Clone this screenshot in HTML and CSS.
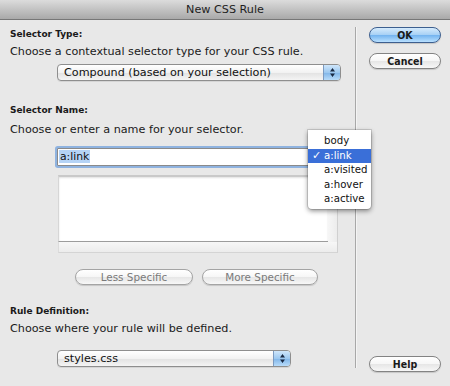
FILE: index.html
```html
<!DOCTYPE html>
<html>
<head>
<meta charset="utf-8">
<link rel="stylesheet" href="styles.css">
</head>
<body>
<div class="window">
  <div class="titlebar">New CSS Rule</div>
  <div class="content">
    <div class="main">
      <div class="label first">Selector Type:</div>
      <div class="desc">Choose a contextual selector type for your CSS rule.</div>
      <div class="popup wide">
        <span class="popup-text">Compound (based on your selection)</span>
        <span class="popup-arrow"><svg width="7" height="11" viewBox="0 0 7 11"><path d="M3.5 1 L6 4.5 H1 Z M3.5 10 L6 6.5 H1 Z" fill="#1a2a44"/></svg></span>
      </div>
      <div class="label second">Selector Name:</div>
      <div class="desc d2">Choose or enter a name for your selector.</div>
      <div class="field"><span class="sel">a:link</span></div>
      <div class="listbox">
        <div class="listrow">
          <div class="listarea"></div>
          <div class="vscroll"></div>
        </div>
        <div class="hscroll"></div>
      </div>
      <div class="specific">
        <span class="pill dim w118">Less Specific</span>
        <span class="pill dim w116">More Specific</span>
      </div>
      <div class="label third">Rule Definition:</div>
      <div class="desc">Choose where your rule will be defined.</div>
      <div class="popup narrow">
        <span class="popup-text">styles.css</span>
        <span class="popup-arrow"><svg width="7" height="11" viewBox="0 0 7 11"><path d="M3.5 1 L6 4.5 H1 Z M3.5 10 L6 6.5 H1 Z" fill="#1a2a44"/></svg></span>
      </div>
    </div>
    <div class="side">
      <div class="sep"></div>
      <div class="buttons">
        <span class="pill default">OK</span>
        <span class="pill">Cancel</span>
        <span class="spacer"></span>
        <span class="pill">Help</span>
      </div>
    </div>
  </div>
  <div class="menu">
    <div class="item">body</div>
    <div class="item active"><span class="check">✓</span>a:link</div>
    <div class="item">a:visited</div>
    <div class="item">a:hover</div>
    <div class="item">a:active</div>
  </div>
</div>
</body>
</html>
```

FILE: styles.css
```css
* { box-sizing: border-box; }
html, body { margin: 0; padding: 0; }
body {
  width: 450px;
  height: 386px;
  overflow: hidden;
  background: #e8e8e8;
  font-family: "DejaVu Sans", sans-serif;
  color: #111;
}
.window {
  position: relative;
  width: 450px;
  height: 386px;
  background: #e8e8e8;
}
.titlebar {
  height: 20px;
  background: linear-gradient(#dcdcdc, #a9a9a9);
  border-bottom: 1px solid #777;
  text-align: center;
  font-size: 11.2px;
  line-height: 19px;
  color: #1e1e1e;
}
.content {
  display: flex;
  height: 366px;
}
.main {
  width: 355px;
  padding-left: 10px;
  display: flex;
  flex-direction: column;
}
.label {
  font-size: 9px;
  font-weight: bold;
  height: 12px;
  line-height: 12px;
  color: #1a1a1a;
}
.label.first { margin-top: 8px; }
.label.second { margin-top: 23px; }
.label.third { margin-top: 20px; }
.desc {
  font-size: 11.2px;
  height: 14px;
  line-height: 14px;
  margin-top: 5px;
  color: #1a1a1a;
}
.desc.d2 { margin-top: 7px; }
.popup {
  margin-top: 5px;
  margin-left: 47px;
  height: 17px;
  display: flex;
  border: 1px solid #8e8e8e;
  border-radius: 4px;
  background: linear-gradient(#ffffff, #f2f2f2 50%, #e2e2e2 51%, #f4f4f4);
  overflow: hidden;
  box-shadow: 0 1px 0 rgba(0,0,0,0.08);
}
.popup.wide { width: 284px; }
.popup.narrow { width: 234px; margin-top: 14px; }
.popup-text {
  flex: 1;
  font-size: 11.2px;
  line-height: 15px;
  padding-left: 6px;
  color: #111;
}
.popup-arrow {
  width: 17px;
  display: flex;
  align-items: center;
  justify-content: center;
  border-left: 1px solid #7c9ac0;
  background: linear-gradient(#cfe6fb, #9cc8f0 50%, #7fb4e8 51%, #b8dcfa);
}
.field {
  margin-top: 11px;
  margin-left: 47px;
  width: 281px;
  height: 18px;
  background: #fff;
  border: 1px solid #8a8a8a;
  box-shadow: 0 0 0 2px #8fb3e0;
  border-radius: 1px;
  font-size: 10.8px;
  line-height: 15px;
  padding-left: 1px;
}
.sel { background: #b5d3f5; padding: 0 1px; }
.listbox {
  margin-top: 9px;
  margin-left: 48px;
  width: 280px;
  height: 78px;
  display: flex;
  flex-direction: column;
}
.listrow { display: flex; flex: 1; }
.listarea {
  flex: 1;
  background: #fff;
  border-top: 2px solid #c9c9c9;
  border-left: 1px solid #d6d6d6;
  border-bottom: 1px solid #9c9c9c;
  box-shadow: inset 0 1px 2px rgba(0,0,0,0.12);
}
.vscroll {
  width: 10px;
  background: linear-gradient(90deg, #f6f6f6, #ececec);
  border-right: 1px solid #d0d0d0;
}
.hscroll {
  height: 11px;
  background: linear-gradient(#f7f7f7, #ececec);
  border-bottom: 1px solid #d4d4d4;
  border-left: 1px solid #dcdcdc;
  border-right: 1px solid #d0d0d0;
}
.specific {
  margin-top: 16px;
  margin-left: 65px;
  display: flex;
  gap: 9px;
}
.pill {
  display: flex;
  align-items: center;
  justify-content: center;
  height: 16px;
  border: 1px solid #838383;
  border-radius: 9px;
  background: linear-gradient(#ffffff, #f6f6f6 50%, #e6e6e6 51%, #f7f7f7);
  font-size: 10.4px;
  color: #111;
  box-shadow: 0 1px 1px rgba(0,0,0,0.15);
}
.pill.dim { color: #7a7a7a; border-color: #a4a4a4; }
.w118 { width: 118px; }
.w116 { width: 116px; }
.side {
  flex: 1;
  display: flex;
}
.sep {
  width: 1px;
  margin-top: 7px;
  height: 341px;
  background: #a8a8a8;
  box-shadow: 1px 0 0 #f4f4f4;
}
.buttons {
  margin-left: 13px;
  margin-top: 7px;
  margin-bottom: 14px;
  width: 72px;
  display: flex;
  flex-direction: column;
  gap: 10px;
}
.buttons .pill {
  width: 72px;
  font-family: "DejaVu Sans Condensed", "DejaVu Sans", sans-serif;
  font-stretch: condensed;
  font-weight: bold;
  font-size: 10.5px;
  color: #1a1a1a;
}
.spacer { flex: 1; }
.pill.default {
  border-color: #3d5f8f;
  background: linear-gradient(#d6ebfc, #a6d0f5 50%, #72b3ef 51%, #b9e0ff);
}
.menu {
  position: absolute;
  left: 308px;
  top: 130px;
  width: 63px;
  height: 79px;
  background: #fff;
  border-radius: 0 0 4px 4px;
  box-shadow: 0 2px 5px rgba(0,0,0,0.45), 0 0 0 1px rgba(0,0,0,0.12);
  padding-top: 4px;
}
.item {
  height: 14.5px;
  line-height: 14px;
  font-size: 10.2px;
  padding-left: 16px;
  color: #111;
  position: relative;
}
.item.active {
  background: #3a6fd8;
  color: #fff;
}
.check {
  position: absolute;
  left: 4px;
  top: 0;
  font-size: 11px;
}
```
